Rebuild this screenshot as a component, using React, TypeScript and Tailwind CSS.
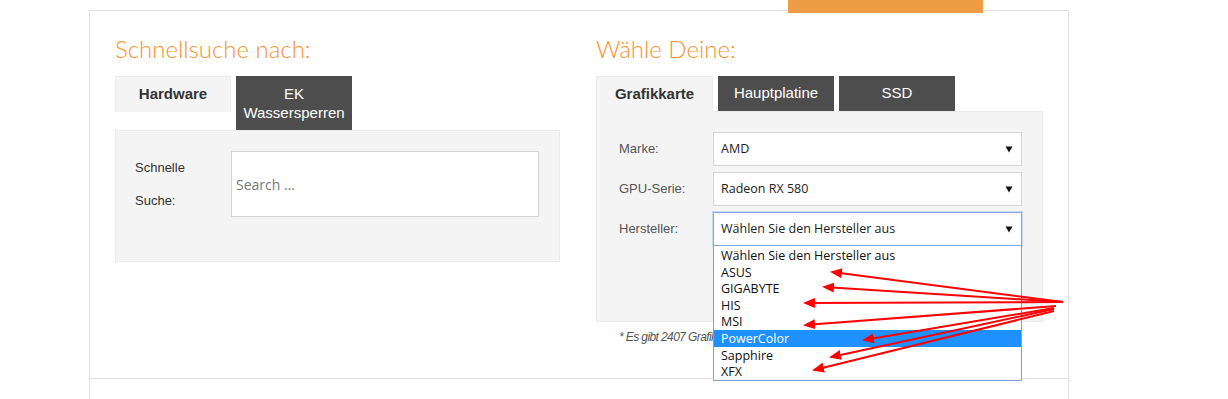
import React from 'react';

const arrows = [
	{ x1: 1063, y1: 302, x2: 832, y2: 272 },
	{ x1: 1063, y1: 302, x2: 824, y2: 287 },
	{ x1: 1063, y1: 302, x2: 805, y2: 303 },
	{ x1: 1056, y1: 306, x2: 805, y2: 325 },
	{ x1: 1054, y1: 308, x2: 864, y2: 340 },
	{ x1: 1054, y1: 309, x2: 831, y2: 357 },
	{ x1: 1054, y1: 311, x2: 814, y2: 370 },
];

const hersteller = [
	'Wählen Sie den Hersteller aus',
	'ASUS',
	'GIGABYTE',
	'HIS',
	'MSI',
	'PowerColor',
	'Sapphire',
	'XFX',
];

const Caret = () => (
	<svg width="8" height="7" viewBox="0 0 8 7" className="shrink-0">
		<polygon points="0.5,0.5 7.5,0.5 4,6.5" fill="#111" />
	</svg>
);

const Select = (props: { value: string; focus?: boolean }) => (
	<div
		className={`w-[309px] h-[34px] bg-white flex items-center justify-between pl-[7px] pr-[8px] border ${
			props.focus ? 'border-[#83a9e6] shadow-[0_0_0_1px_#c6d8f5]' : 'border-[#d4d4d4]'
		}`}>
		<span className="text-[12.5px] text-[#222]" style={{ fontFamily: '"Open Sans", sans-serif' }}>
			{props.value}
		</span>
		<Caret />
	</div>
);

const Row = (props: { label: string; children: React.ReactNode }) => (
	<div className="flex items-center">
		<div className="w-[94px] text-[13px] text-[#555]">{props.label}</div>
		{props.children}
	</div>
);

export default function App() {
	return (
		<div
			className="relative w-full h-[399px] overflow-hidden bg-white"
			style={{ fontFamily: '"Liberation Sans", Arial, sans-serif' }}>
			{/* orange nav marker over the top border */}
			<div className="absolute left-[788px] top-0 w-[195px] h-[13px] bg-[#ee9c45] z-10"></div>

			<div className="ml-[89px] mt-[10px] w-[980px] h-[389px] border-x border-t border-[#e1e1e1]">
				<div className="h-[367px] flex gap-[36px] px-[25px] pt-[23px]">
					{/* left column */}
					<div className="w-[445px]">
						<h2
							className="h-[30px] leading-[30px] text-[24px] font-light text-[#f7922f]"
							style={{ fontFamily: 'Lato, sans-serif' }}>
							Schnellsuche nach:
						</h2>
						<div className="mt-[12px] flex items-start gap-[5px]">
							<div className="w-[116px] h-[36px] flex items-center justify-center bg-[#f4f4f4] border border-b-0 border-[#ebebeb] text-[15px] font-bold text-[#333]">
								Hardware
							</div>
							<div className="w-[116px] h-[54px] flex flex-col items-center justify-center bg-[#4d4d4d] text-[15px] leading-[19px] text-white">
								<span>EK</span>
								<span>Wassersperren</span>
							</div>
						</div>
						<div className="h-[132px] bg-[#f4f4f4] border border-[#ebebeb] pt-[20px] pl-[19px] flex">
							<div className="w-[96px] text-[13px] leading-[33px] text-[#333]">
								Schnelle
								<br />
								Suche:
							</div>
							<div className="w-[308px] h-[66px] bg-white border border-[#d4d4d4] flex items-center pl-[4px]">
								<span className="text-[14px] text-[#777]" style={{ fontFamily: '"Open Sans", sans-serif' }}>
									Search …
								</span>
							</div>
						</div>
					</div>

					{/* right column */}
					<div className="w-[447px]">
						<h2
							className="h-[30px] leading-[30px] text-[24px] font-light text-[#f7922f]"
							style={{ fontFamily: 'Lato, sans-serif' }}>
							Wähle Deine:
						</h2>
						<div className="mt-[12px] flex items-start gap-[5px]">
							<div className="relative z-10 -mb-px w-[117px] h-[36px] flex items-center justify-center bg-[#f4f4f4] border border-b-0 border-[#ebebeb] text-[15px] font-bold text-[#333]">
								Grafikkarte
							</div>
							<div className="w-[116px] h-[35px] flex items-center justify-center bg-[#4d4d4d] text-[15px] text-white">
								Hauptplatine
							</div>
							<div className="w-[116px] h-[35px] flex items-center justify-center bg-[#4d4d4d] text-[15px] text-white">
								SSD
							</div>
						</div>
						<div className="h-[211px] bg-[#f4f4f4] border border-[#ebebeb] pt-[20px] pl-[22px] flex flex-col gap-[6px]">
							<Row label="Marke:">
								<Select value="AMD" />
							</Row>
							<Row label="GPU-Serie:">
								<Select value="Radeon RX 580" />
							</Row>
							<Row label="Hersteller:">
								<div className="relative">
									<Select value="Wählen Sie den Hersteller aus" focus />
									<ul
										className="absolute left-0 top-[34px] z-20 w-[309px] bg-white border border-[#7f9fd6] border-t-0 pt-[1px]"
										style={{ fontFamily: '"Open Sans", sans-serif' }}>
										{hersteller.map((h) => (
											<li
												key={h}
												className={`h-[16.6px] leading-[18px] pl-[7px] text-[12.5px] ${
													h === 'PowerColor' ? 'bg-[#1e90ff] text-white' : 'text-[#111]'
												}`}>
												{h}
											</li>
										))}
									</ul>
								</div>
							</Row>
						</div>
						<p className="mt-[6px] ml-[23px] text-[12px] tracking-[-0.6px] italic text-[#555] whitespace-nowrap">
							* Es gibt 2407 Grafikkarten in unserer Datenbank
						</p>
					</div>
				</div>
				<div className="border-t border-[#e1e1e1]"></div>
			</div>

			{/* annotation arrows */}
			<svg className="absolute inset-0 z-30 pointer-events-none" width="1228" height="399">
				<defs>
					<marker id="head" markerWidth="6" markerHeight="5" refX="5" refY="2.5" orient="auto" markerUnits="strokeWidth">
						<polygon points="0,0 6,2.5 0,5" fill="#f00" />
					</marker>
				</defs>
				{arrows.map((a, i) => (
					<line
						key={i}
						x1={a.x1}
						y1={a.y1}
						x2={a.x2}
						y2={a.y2}
						stroke="#f00"
						strokeWidth="2"
						markerEnd="url(#head)"
					/>
				))}
			</svg>
		</div>
	);
}
